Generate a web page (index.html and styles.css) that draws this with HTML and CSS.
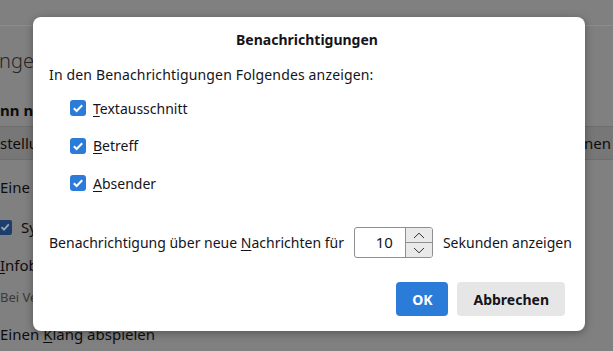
FILE: index.html
```html
<!DOCTYPE html>
<html lang="de">
<head>
    <meta charset="UTF-8">
    <title>Benachrichtigungen</title>
    <link rel="stylesheet" href="styles.css">
</head>
<body>
    <div class="page">
        <div class="tabbar"></div>
        <div class="page-heading">ngehende Nachrichten</div>
        <div class="section-title">nn neue Nachrichten eintreffen</div>
        <div class="band">
            <span>stellungen</span>
            <span class="band-right">nen</span>
        </div>
        <div class="page-row first-row"><span>Eine <u>N</u>achricht anzeigen</span></div>
        <div class="page-row page-check">
            <span class="small-box">
                <svg width="12" height="12" viewBox="0 0 12 12"><path d="M2.5 6.2 L5 8.7 L9.8 3.4" fill="none" stroke="#9aa6b4" stroke-width="1.8"/></svg>
            </span>
            <span>Systembenachrichtigung verwenden</span>
        </div>
        <div class="page-row"><span><u>I</u>nfobereich</span></div>
        <div class="page-row page-hint">Bei Verwendung</div>
        <div class="page-row last-row"><span>Einen <u>K</u>lang abspielen</span></div>
    </div>

    <div class="dialog">
        <h1 class="dialog-title">Benachrichtigungen</h1>
        <p class="dialog-intro">In den Benachrichtigungen Folgendes anzeigen:</p>
        <div class="check-list">
            <label class="check-row">
                <span class="check-box">
                    <svg width="16" height="16" viewBox="0 0 16 16"><path d="M3.8 8.3 L6.6 11 L12.2 5.2" fill="none" stroke="#fff" stroke-width="2"/></svg>
                </span>
                <span><u>T</u>extausschnitt</span>
            </label>
            <label class="check-row">
                <span class="check-box">
                    <svg width="16" height="16" viewBox="0 0 16 16"><path d="M3.8 8.3 L6.6 11 L12.2 5.2" fill="none" stroke="#fff" stroke-width="2"/></svg>
                </span>
                <span><u>B</u>etreff</span>
            </label>
            <label class="check-row">
                <span class="check-box">
                    <svg width="16" height="16" viewBox="0 0 16 16"><path d="M3.8 8.3 L6.6 11 L12.2 5.2" fill="none" stroke="#fff" stroke-width="2"/></svg>
                </span>
                <span><u>A</u>bsender</span>
            </label>
        </div>
        <div class="duration-row">
            <span>Benachrichtigung über neue <u>N</u>achrichten für</span>
            <div class="number-input">
                <span class="number-value">10</span>
                <div class="spinner">
                    <span class="spin-btn">
                        <svg width="12" height="7" viewBox="0 0 12 7"><path d="M1 6 L6 1.2 L11 6" fill="none" stroke="#333" stroke-width="1"/></svg>
                    </span>
                    <span class="spin-btn">
                        <svg width="12" height="7" viewBox="0 0 12 7"><path d="M1 1 L6 5.8 L11 1" fill="none" stroke="#333" stroke-width="1"/></svg>
                    </span>
                </div>
            </div>
            <span>Sekunden anzeigen</span>
        </div>
        <div class="dialog-buttons">
            <button class="button primary">OK</button>
            <button class="button">Abbrechen</button>
        </div>
    </div>
</body>
</html>
```

FILE: styles.css
```css
body {
    margin: 0;
    width: 613px;
    height: 351px;
    overflow: hidden;
    background-color: #808080;
    font-family: 'Noto Sans', 'Open Sans', sans-serif;
    color: #0d0d0d;
}
u {
    text-decoration-thickness: 1px;
    text-underline-offset: 2px;
}

/* dimmed page behind the dialog */
.page {
    display: flex;
    flex-direction: column;
    font-size: 15px;
}
.tabbar {
    height: 25px;
    border-bottom: 1px solid #8c8c8c;
}
.page-heading {
    margin-top: 20px;
    margin-left: -1px;
    font-size: 20px;
    font-weight: 300;
    color: #262626;
    line-height: 30px;
    white-space: nowrap;
}
.section-title {
    margin-top: 24px;
    font-weight: 700;
    line-height: 20px;
    white-space: nowrap;
}
.band {
    margin-top: 6px;
    height: 32px;
    display: flex;
    align-items: center;
    justify-content: space-between;
    background-color: #777;
    border-top: 1px solid #6e6e6e;
    border-bottom: 1px solid #6e6e6e;
    white-space: nowrap;
}
.band-right {
    padding-right: 2px;
}
.page-row {
    height: 38px;
    display: flex;
    align-items: center;
    white-space: nowrap;
}
.first-row {
    margin-top: 8px;
}
.page-check {
    gap: 9px;
    margin-top: 2px;
}
.small-box {
    margin-left: -3px;
    width: 15px;
    height: 15px;
    border-radius: 2px;
    background-color: #1d3d6c;
    display: flex;
    align-items: center;
    justify-content: center;
}
.page-hint {
    height: 26px;
    font-size: 13px;
    color: #3a3a3a;
}
.last-row {
    margin-top: 14px;
    height: 20px;
}

/* dialog */
.dialog {
    position: absolute;
    left: 33px;
    top: 17px;
    width: 552px;
    height: 314px;
    box-sizing: border-box;
    padding: 0 20px 0 16px;
    background-color: #fff;
    border-radius: 8px;
    box-shadow: 0 2px 8px rgba(0, 0, 0, 0.35);
    display: flex;
    flex-direction: column;
    color: #15141a;
    font-size: 14px;
}
.dialog-title {
    margin: 13px 0 0;
    font-size: 14px;
    font-weight: 700;
    line-height: 20px;
    text-align: center;
}
.dialog-intro {
    margin: 15px 0 0;
    line-height: 20px;
    letter-spacing: 0.15px;
}
.check-list {
    margin-top: 13px;
    margin-left: 21px;
    display: flex;
    flex-direction: column;
    gap: 17.5px;
}
.check-row {
    display: flex;
    align-items: center;
    gap: 7px;
    height: 20px;
}
.check-box {
    width: 16px;
    height: 16px;
    border-radius: 3px;
    background-color: #2b7bd9;
    display: flex;
}
.duration-row {
    margin-top: 34px;
    display: flex;
    align-items: center;
    gap: 10px;
    white-space: nowrap;
}
.number-input {
    flex-shrink: 0;
    width: 79px;
    height: 31px;
    box-sizing: border-box;
    border: 1px solid #8f8f8f;
    border-radius: 3px;
    display: flex;
    overflow: hidden;
}
.number-value {
    flex: 1;
    text-align: right;
    padding-right: 12px;
    line-height: 29px;
    font-size: 15px;
}
.spinner {
    width: 26px;
    display: flex;
    flex-direction: column;
    border-left: 1px solid #8f8f8f;
}
.spin-btn {
    flex: 1;
    display: flex;
    align-items: center;
    justify-content: center;
    background-color: #e9e9e9;
}
.spin-btn + .spin-btn {
    border-top: 1px solid #8f8f8f;
}
.dialog-buttons {
    margin-top: 24px;
    display: flex;
    justify-content: flex-end;
    gap: 9px;
}
.button {
    height: 34px;
    padding: 0 16px;
    border: none;
    border-radius: 4px;
    background-color: #e6e6e6;
    color: #15141a;
    font-family: 'Noto Sans', 'Open Sans', sans-serif;
    font-size: 14px;
    font-weight: 700;
}
.button.primary {
    width: 52px;
    padding: 0;
    background-color: #2b7bd9;
    color: #fff;
}
```
